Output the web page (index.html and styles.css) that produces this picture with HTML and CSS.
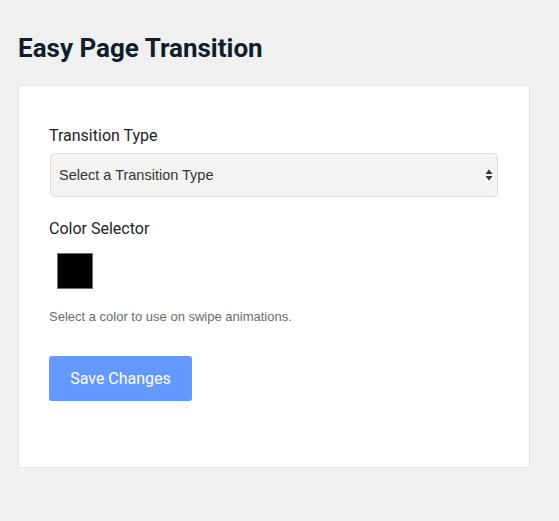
FILE: index.html
```html
<!DOCTYPE html>
<html lang="en">
<head>
<meta charset="utf-8">
<title>Easy Page Transition</title>
<link rel="stylesheet" href="styles.css">
</head>
<body>
<div class="wrap">
  <h1 class="title">Easy Page Transition</h1>
  <div class="card">
    <label class="field-label">Transition Type</label>
    <div class="select" role="combobox">
      <span class="select-text">Select a Transition Type</span>
      <svg class="select-arrow" width="8" height="12" viewBox="0 0 8 12"><path d="M4 0.5 L7.5 5 H0.5 Z M4 11.5 L7.5 7 H0.5 Z" fill="#333"/></svg>
    </div>
    <label class="field-label label-color">Color Selector</label>
    <div class="swatch-row"><span class="swatch"></span></div>
    <p class="help">Select a color to use on swipe animations.</p>
    <button class="btn" type="button">Save Changes</button>
  </div>
</div>
</body>
</html>
```
FILE: styles.css
```css
html, body {
  margin: 0;
  padding: 0;
  background: #f0f0f0;
}
.wrap {
  padding: 33px 29px 40px 18px;
  font-family: Roboto, "Liberation Sans", sans-serif;
}
.title {
  margin: 0 0 22px 0;
  font-size: 26px;
  line-height: 30px;
  font-weight: 700;
  color: #101d2e;
}
.card {
  background: #fff;
  border: 1px solid #e3e3e3;
  padding: 40px 31px 66px 30px;
  display: flex;
  flex-direction: column;
  align-items: flex-start;
}
.field-label {
  display: block;
  font-size: 16px;
  line-height: 20px;
  color: #1d2327;
  margin-bottom: 7px;
}
.label-color {
  margin-top: 22px;
  margin-bottom: 14px;
}
.select {
  box-sizing: border-box;
  align-self: stretch;
  margin-left: 1px;
  height: 44px;
  background: #f3f3f3;
  border: 1px solid #dcdcdc;
  border-radius: 5px;
  display: flex;
  align-items: center;
  justify-content: space-between;
  padding: 0 4px 0 8px;
  font-family: "Liberation Sans", Arial, sans-serif;
  font-size: 14.5px;
  color: #333;
}
.select-arrow {
  display: block;
}
.swatch-row {
  padding-left: 8px;
}
.swatch {
  display: block;
  box-sizing: border-box;
  width: 36px;
  height: 36px;
  background: #000;
  border: 1px solid #707070;
}
.help {
  margin: 20px 0 0 0;
  font-family: "Liberation Sans", Arial, sans-serif;
  font-size: 13px;
  line-height: 16px;
  color: #6b6b6b;
}
.btn {
  margin-top: 31px;
  width: 143px;
  height: 45px;
  border: none;
  border-radius: 3px;
  background: #6699ff;
  color: #fff;
  font-family: Roboto, "Liberation Sans", sans-serif;
  font-size: 16px;
  padding: 0;
}
```
